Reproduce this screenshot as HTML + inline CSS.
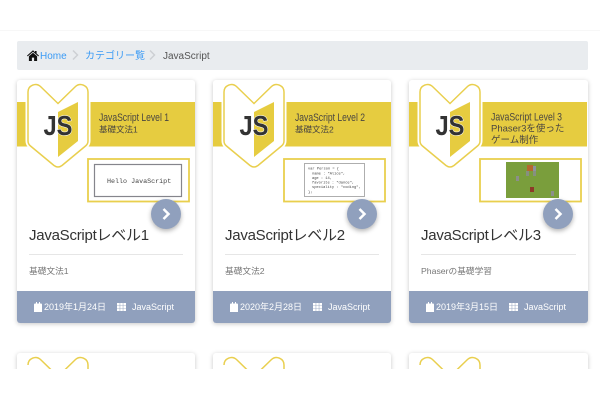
<!DOCTYPE html>
<html lang="ja">
<head>
<meta charset="utf-8">
<style>
*{box-sizing:border-box;margin:0;padding:0}
html,body{width:600px;height:400px;overflow:hidden;background:#fff;font-family:"Liberation Sans","Noto Sans CJK JP",sans-serif}
#top{position:absolute;left:0;top:0;width:600px;height:31px;background:#fff;border-bottom:1px solid #f7f7f7}
#main{position:absolute;left:0;top:32px;width:600px;height:337px;overflow:hidden;background:#fff}
#crumb{position:absolute;left:17px;top:9px;width:571px;height:29px;background:#e9ecef;border-radius:2px;font-size:10px;line-height:31px;color:#555}
#crumb span,#crumb svg{position:absolute;white-space:nowrap}
#crumb .l{color:#3b9bf5}
#crumb .s{top:9px}
.card{position:absolute;width:178px;height:243px;background:#fff;border-radius:3px;box-shadow:0 1px 5px rgba(0,0,0,.22);overflow:hidden}
.card.low{height:40px}
.card svg.art{position:absolute;left:0;top:0;width:178px;height:128px}
.btn{position:absolute;width:30px;height:30px;border-radius:50%;top:119px;left:134px;background:#90a0bd;box-shadow:0 2px 5px rgba(0,0,0,.3)}
.btn svg{position:absolute;left:0;top:0}
.t{position:absolute;left:12px;top:146px;font-size:15px;letter-spacing:-.25px;line-height:20px;color:#333;white-space:nowrap}
.r{position:absolute;left:12px;width:154px;top:174px;height:1px;background:#e6e6e6}
.d{position:absolute;left:12px;top:184px;font-size:8.7px;line-height:14px;color:#777;white-space:nowrap}
.f{position:absolute;left:0;top:211px;width:100%;height:32px;background:#90a0bd;color:#fff;font-size:9px;line-height:32px}
.f span,.f svg{position:absolute;white-space:nowrap}
.lab{font-size:11px;fill:#4a4640;font-family:"Liberation Sans","Noto Sans CJK JP",sans-serif}
.js{font-family:"Liberation Sans",sans-serif;font-weight:700;font-size:28px;fill:#333;stroke:#fff;stroke-width:1px;paint-order:stroke}
</style>
</head>
<body>
<div id="top"></div>
<div id="main">
<div id="crumb">
<svg style="left:10px;top:9px" width="12" height="11" viewBox="0 0 12 11"><path d="M6 .3 0 5.600l.7.8L6 1.800l5.300 4.600.7-.8L9.600 3.500V1H8v1.100zM1.900 6.300V11h3V7.600h2.200V11h3V6.300L6 2.800z" fill="#111"/></svg>
<span class="l" style="left:23px">Home</span>
<svg class="s" style="left:55px" width="7" height="10" viewBox="0 0 7 10"><path d="M1 .5 5.500 5 1 9.500" fill="none" stroke="#cdd0d4" stroke-width="1.500"/></svg>
<span class="l" style="left:68px">カテゴリー覧</span>
<svg class="s" style="left:132px" width="7" height="10" viewBox="0 0 7 10"><path d="M1 .5 5.500 5 1 9.500" fill="none" stroke="#cdd0d4" stroke-width="1.500"/></svg>
<span style="left:146px">JavaScript</span>
</div>

<!-- Row 1 -->
<div class="card" style="left:17px;top:48px">
<svg class="art" viewBox="17 80 178 128">
<rect x="17" y="102" width="178" height="44.500" fill="#e6cc40"/>
<path d="M28 92a7.500 7.500 0 0 1 12.500-5.500L58 103.500 75.500 86.500A7.500 7.500 0 0 1 88 92V141q0 3-2.500 5L62 165.500q-4 3-8 0L30.500 146q-2.500-2-2.500-5Z" fill="#fff" stroke="#fff" stroke-width="5"/>
<path d="M28 92a7.500 7.500 0 0 1 12.500-5.500L58 103.500 75.500 86.500A7.500 7.500 0 0 1 88 92V141q0 3-2.500 5L62 165.500q-4 3-8 0L30.500 146q-2.500-2-2.500-5Z" fill="#fff" stroke="#e9cf4e" stroke-width="1.500"/>
<path d="M58 112 78 102V141L58 157z" fill="#e6cc40"/>
<text class="js" x="43.500" y="135" textLength="29" lengthAdjust="spacingAndGlyphs">JS</text>
<text class="lab" x="99" y="121" textLength="70" lengthAdjust="spacingAndGlyphs">JavaScript Level 1</text>
<text class="lab" x="99" y="132.500" style="font-size:8.500px">基礎文法1</text>
<rect x="88" y="159" width="101" height="42.500" fill="#fff" stroke="#e9cf4e" stroke-width="1.800"/>
<rect x="94.500" y="164.500" width="87" height="32" fill="#fff" stroke="#85858c" stroke-width="1.200"/>
<text x="107" y="183" font-family="Liberation Mono" font-size="6.700" fill="#444">Hello JavaScript</text>
</svg>
<div class="btn"><svg width="30" height="30" viewBox="0 0 30 30"><path d="M12.500 10 17.500 15 12.500 20" fill="none" stroke="#fff" stroke-width="2.500"/></svg></div>
<div class="t">JavaScriptレベル1</div><div class="r"></div><div class="d">基礎文法1</div>
<div class="f">
<svg style="left:17px;top:11px" width="8" height="10" viewBox="0 0 8 10"><path d="M0 2.500a1 1 0 0 1 1-1h1V0h1v1.500h2V0h1v1.500h1a1 1 0 0 1 1 1V10H0z" fill="#fff"/></svg>
<span style="left:27px">2019年1月24日</span>
<svg style="left:100px;top:11.500px" width="9" height="8" viewBox="0 0 9 8"><path d="M0 0h2.700v2.400H0zM3.200 0h2.600v2.400H3.200zM6.300 0H9v2.400H6.300zM0 2.800h2.700v2.400H0zM3.200 2.800h2.600v2.400H3.200zM6.300 2.800H9v2.400H6.300zM0 5.600h2.700V8H0zM3.200 5.600h2.600V8H3.200zM6.300 5.600H9V8H6.300z" fill="#fff"/></svg>
<span style="left:115px">JavaScript</span>
</div>
</div>

<div class="card" style="left:213px;top:48px">
<svg class="art" viewBox="17 80 178 128">
<rect x="17" y="102" width="178" height="44.500" fill="#e6cc40"/>
<path d="M28 92a7.500 7.500 0 0 1 12.500-5.500L58 103.500 75.500 86.500A7.500 7.500 0 0 1 88 92V141q0 3-2.500 5L62 165.500q-4 3-8 0L30.500 146q-2.500-2-2.500-5Z" fill="#fff" stroke="#fff" stroke-width="5"/>
<path d="M28 92a7.500 7.500 0 0 1 12.500-5.500L58 103.500 75.500 86.500A7.500 7.500 0 0 1 88 92V141q0 3-2.500 5L62 165.500q-4 3-8 0L30.500 146q-2.500-2-2.500-5Z" fill="#fff" stroke="#e9cf4e" stroke-width="1.500"/>
<path d="M58 112 78 102V141L58 157z" fill="#e6cc40"/>
<text class="js" x="43.500" y="135" textLength="29" lengthAdjust="spacingAndGlyphs">JS</text>
<text class="lab" x="99" y="121" textLength="70" lengthAdjust="spacingAndGlyphs">JavaScript Level 2</text>
<text class="lab" x="99" y="132.500" style="font-size:8.500px">基礎文法2</text>
<rect x="88" y="159" width="101" height="42.500" fill="#fff" stroke="#e9cf4e" stroke-width="1.800"/>
<rect x="108.500" y="163.500" width="60" height="33" fill="#fff" stroke="#9a9a9a" stroke-width=".8"/>
<g font-family="Liberation Mono" font-size="3.700" fill="#444">
<text x="112" y="169.500">var Person = {</text>
<text x="116" y="174.500">name       : "Alice",</text>
<text x="116" y="179">age        : 14,</text>
<text x="116" y="183.500">favorite   : "dance",</text>
<text x="116" y="188">speciality : "coding",</text>
<text x="112" y="193">};</text>
</g>
</svg>
<div class="btn"><svg width="30" height="30" viewBox="0 0 30 30"><path d="M12.500 10 17.500 15 12.500 20" fill="none" stroke="#fff" stroke-width="2.500"/></svg></div>
<div class="t">JavaScriptレベル2</div><div class="r"></div><div class="d">基礎文法2</div>
<div class="f">
<svg style="left:17px;top:11px" width="8" height="10" viewBox="0 0 8 10"><path d="M0 2.500a1 1 0 0 1 1-1h1V0h1v1.500h2V0h1v1.500h1a1 1 0 0 1 1 1V10H0z" fill="#fff"/></svg>
<span style="left:27px">2020年2月28日</span>
<svg style="left:100px;top:11.500px" width="9" height="8" viewBox="0 0 9 8"><path d="M0 0h2.700v2.400H0zM3.200 0h2.600v2.400H3.200zM6.300 0H9v2.400H6.300zM0 2.800h2.700v2.400H0zM3.200 2.800h2.600v2.400H3.200zM6.300 2.800H9v2.400H6.300zM0 5.600h2.700V8H0zM3.200 5.600h2.600V8H3.200zM6.300 5.600H9V8H6.300z" fill="#fff"/></svg>
<span style="left:115px">JavaScript</span>
</div>
</div>

<div class="card" style="left:409px;top:48px;width:179px">
<svg class="art" viewBox="17 80 178 128">
<rect x="17" y="102" width="179" height="44.500" fill="#e6cc40"/>
<path d="M28 92a7.500 7.500 0 0 1 12.500-5.500L58 103.500 75.500 86.500A7.500 7.500 0 0 1 88 92V141q0 3-2.500 5L62 165.500q-4 3-8 0L30.500 146q-2.500-2-2.500-5Z" fill="#fff" stroke="#fff" stroke-width="5"/>
<path d="M28 92a7.500 7.500 0 0 1 12.500-5.500L58 103.500 75.500 86.500A7.500 7.500 0 0 1 88 92V141q0 3-2.500 5L62 165.500q-4 3-8 0L30.500 146q-2.500-2-2.500-5Z" fill="#fff" stroke="#e9cf4e" stroke-width="1.500"/>
<path d="M58 112 78 102V141L58 157z" fill="#e6cc40"/>
<text class="js" x="43.500" y="135" textLength="29" lengthAdjust="spacingAndGlyphs">JS</text>
<text class="lab" x="99" y="120.500" textLength="71" lengthAdjust="spacingAndGlyphs">JavaScript Level 3</text>
<text class="lab" x="99" y="131.500" style="font-size:9.500px">Phaser3を使った</text>
<text class="lab" x="99" y="143" style="font-size:9.500px">ゲーム制作</text>
<rect x="88" y="159" width="101" height="42.500" fill="#fff" stroke="#e9cf4e" stroke-width="1.800"/>
<rect x="114" y="162" width="53" height="36" fill="#7a9e3c"/>
<rect x="135" y="165" width="6" height="6" fill="#b4682e"/>
<rect x="141" y="166" width="3" height="5" fill="#8c93a0"/>
<rect x="134" y="171" width="3" height="5" fill="#87907f"/>
<rect x="141" y="171" width="3" height="5" fill="#87907f"/>
<rect x="124" y="176" width="3" height="5" fill="#8c8f8a"/>
<rect x="138" y="187" width="4" height="5" fill="#8c3a28"/>
<rect x="159" y="191" width="3" height="5" fill="#8c8f8a"/>
</svg>
<div class="btn"><svg width="30" height="30" viewBox="0 0 30 30"><path d="M12.500 10 17.500 15 12.500 20" fill="none" stroke="#fff" stroke-width="2.500"/></svg></div>
<div class="t">JavaScriptレベル3</div><div class="r" style="width:155px"></div><div class="d">Phaserの基礎学習</div>
<div class="f">
<svg style="left:17px;top:11px" width="8" height="10" viewBox="0 0 8 10"><path d="M0 2.500a1 1 0 0 1 1-1h1V0h1v1.500h2V0h1v1.500h1a1 1 0 0 1 1 1V10H0z" fill="#fff"/></svg>
<span style="left:27px">2019年3月15日</span>
<svg style="left:100px;top:11.500px" width="9" height="8" viewBox="0 0 9 8"><path d="M0 0h2.700v2.400H0zM3.200 0h2.600v2.400H3.200zM6.300 0H9v2.400H6.300zM0 2.800h2.700v2.400H0zM3.200 2.800h2.600v2.400H3.200zM6.300 2.800H9v2.400H6.300zM0 5.600h2.700V8H0zM3.200 5.600h2.600V8H3.200zM6.300 5.600H9V8H6.300z" fill="#fff"/></svg>
<span style="left:115px">JavaScript</span>
</div>
</div>

<!-- Row 2, clipped -->
<div class="card low" style="left:17px;top:321px">
<svg class="art" style="height:40px" viewBox="17 80 178 40"><path d="M28 92a7.500 7.500 0 0 1 12.500-5.500L58 103.500 75.500 86.500A7.500 7.500 0 0 1 88 92V120" fill="none" stroke="#e9cf4e" stroke-width="1.500"/></svg>
</div>
<div class="card low" style="left:213px;top:321px">
<svg class="art" style="height:40px" viewBox="17 80 178 40"><path d="M28 92a7.500 7.500 0 0 1 12.500-5.500L58 103.500 75.500 86.500A7.500 7.500 0 0 1 88 92V120" fill="none" stroke="#e9cf4e" stroke-width="1.500"/></svg>
</div>
<div class="card low" style="left:409px;top:321px;width:179px">
<svg class="art" style="height:40px" viewBox="17 80 178 40"><path d="M28 92a7.500 7.500 0 0 1 12.500-5.500L58 103.500 75.500 86.500A7.500 7.500 0 0 1 88 92V120" fill="none" stroke="#e9cf4e" stroke-width="1.500"/></svg>
</div>
</div>
</body>
</html>
